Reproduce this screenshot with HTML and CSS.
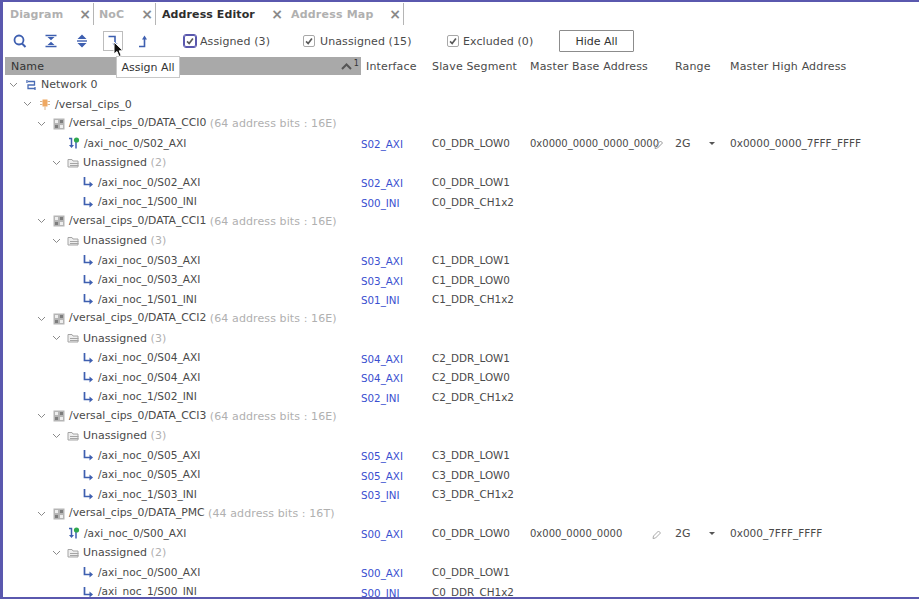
FILE: index.html
```html
<!DOCTYPE html>
<html lang="en">
<head>
<meta charset="utf-8">
<title>Address Editor</title>
<link rel="stylesheet" href="styles.css">
</head>
<body>
<svg class="defs" width="0" height="0">
  <defs>
    <symbol id="i-chip" viewBox="0 0 12 12"><rect x="0.5" y="0.5" width="11" height="11" fill="#b5b5b5"/><rect x="2" y="2" width="3" height="3" fill="#eee"/><rect x="7" y="7" width="3" height="3" fill="#eee"/><rect x="7" y="2" width="3" height="3" fill="#7d7d7d"/><rect x="2" y="7" width="3" height="3" fill="#7d7d7d"/></symbol>
    <symbol id="i-folder" viewBox="0 0 12 12"><path d="M1 2.500h4l1 1.500h5v6H1z" fill="#eee" stroke="#a5a5a5"/><path d="M3 6.500h8.500M3 8.500h8.500" stroke="#a5a5a5"/></symbol>
    <symbol id="i-un" viewBox="0 0 12 12"><path d="M2.500 1v7.500H8" fill="none" stroke="#3e5fb0" stroke-width="1.700"/><path d="M7.500 5.500l3.500 3-3.500 3z" fill="#3e5fb0"/></symbol>
    <symbol id="i-as" viewBox="0 0 12 12"><path d="M1 1.500h2.500v8" fill="none" stroke="#3e5fb0" stroke-width="1.500"/><path d="M1 8l2.500 3L6 8z" fill="#3e5fb0"/><path d="M8 11.500V5" stroke="#3e5fb0" stroke-width="1.500"/><circle cx="8.500" cy="3" r="2.600" fill="#2fa84f"/></symbol>
    <symbol id="i-ip" viewBox="0 0 12 12"><rect x="3.500" y="1.500" width="5" height="7" fill="#f0a860"/><path d="M1 3.500h2.500M1 6.500h2.500M8.500 3.500H11M8.500 6.500H11M6 8.500V12" stroke="#d8b48c"/></symbol>
    <symbol id="i-net" viewBox="0 0 12 12"><path d="M3 2.500h6.500v3.500H3v3.500h7" fill="none" stroke="#4a6cb5" stroke-width="1.300"/><path d="M2 1v3M10 8v3" stroke="#4a6cb5" stroke-width="1.300"/></symbol>
    <symbol id="i-chev" viewBox="0 0 9 6"><path d="M1 1l3.500 3.500L8 1" fill="none" stroke="#8a8a8a" stroke-width="1"/></symbol>
    <symbol id="i-check" viewBox="0 0 12 12"><path d="M2.500 6.500l2.500 2.500 4.500-6" fill="none" stroke="#5a5a5a" stroke-width="2"/></symbol>
  </defs>
</svg>
<div class="frame">
  <div class="tabs">
    <div class="tab tab-diagram"><span class="tab-label">Diagram</span><span class="tab-x">×</span></div>
    <div class="tab tab-noc"><span class="tab-label">NoC</span><span class="tab-x">×</span></div>
    <div class="tab tab-addr active"><span class="tab-label">Address Editor</span><span class="tab-x">×</span></div>
    <div class="tab tab-map"><span class="tab-label">Address Map</span><span class="tab-x">×</span></div>
  </div>
  <div class="toolbar">
    <div class="tools">
      <span class="tool"><svg width="16" height="16" viewBox="0 0 16 16"><circle cx="7" cy="7" r="4.500" fill="none" stroke="#3e5fb0" stroke-width="1.800"/><path d="M10 10.500l3.500 3.500" stroke="#3e5fb0" stroke-width="2"/></svg></span>
      <span class="tool"><svg width="16" height="16" viewBox="0 0 16 16"><path d="M2.500 2.500h11M2.500 13.500h11" stroke="#3e5fb0" stroke-width="1.400"/><path d="M4.500 4h7L8 7.300zM4.500 12h7L8 8.700z" fill="#3e5fb0"/></svg></span>
      <span class="tool"><svg width="16" height="16" viewBox="0 0 16 16"><path d="M3.500 6L8 1.500 12.500 6zM3.500 10L8 14.500 12.500 10z" fill="#3e5fb0"/><path d="M3 8h10" stroke="#3e5fb0" stroke-width="1.400"/></svg></span>
      <span class="tool tool-on"><svg width="16" height="16" viewBox="0 0 16 16"><path d="M3.500 3.500H10V11" fill="none" stroke="#3e5fb0" stroke-width="1.600"/><path d="M7.500 10.500h5L10 14z" fill="#3e5fb0"/></svg></span>
      <span class="tool"><svg width="16" height="16" viewBox="0 0 16 16"><path d="M3 13.500h5.500V6" fill="none" stroke="#3e5fb0" stroke-width="1.600"/><path d="M6 6.500h5L8.500 2.500z" fill="#3e5fb0"/></svg></span>
    </div>
    <div class="filters">
      <label class="filter filter-a"><span class="box box-focus"><svg width="12" height="12"><use href="#i-check"/></svg></span>Assigned (3)</label>
      <label class="filter filter-u"><span class="box"><svg width="12" height="12"><use href="#i-check"/></svg></span>Unassigned (15)</label>
      <label class="filter filter-e"><span class="box"><svg width="12" height="12"><use href="#i-check"/></svg></span>Excluded (0)</label>
      <button class="btn">Hide All</button>
    </div>
  </div>
  <div class="grid head">
    <div class="h-name"><span>Name</span><span class="sort"><svg width="11" height="7" viewBox="0 0 11 7"><path d="M1 6l4.500-4.500L10 6" fill="none" stroke="#555" stroke-width="2"/></svg><span class="sort-n">1</span></span></div>
    <div class="c-if-h">Interface</div><div>Slave Segment</div><div>Master Base Address</div><div>Range</div><div>Master High Address</div>
  </div>

  <div class="grid row"><div class="nm l0"><svg class="chev"><use href="#i-chev"/></svg><svg class="ic"><use href="#i-net"/></svg>Network 0</div></div>
  <div class="grid row"><div class="nm l1"><svg class="chev"><use href="#i-chev"/></svg><svg class="ic"><use href="#i-ip"/></svg>/versal_cips_0</div></div>

  <div class="grid row"><div class="nm l2"><svg class="chev"><use href="#i-chev"/></svg><svg class="ic"><use href="#i-chip"/></svg>/versal_cips_0/DATA_CCI0 <span class="dim">(64 address bits : 16E)</span></div></div>
  <div class="grid row"><div class="nm l3 leaf"><svg class="ic"><use href="#i-as"/></svg>/axi_noc_0/S02_AXI</div><div class="link">S02_AXI</div><div class="seg">C0_DDR_LOW0</div><div class="base">0x0000_0000_0000_0000<svg class="pen pen-over" width="11" height="11"><path d="M2 9.500l.5-2.500 5-5 2 2-5 5z" fill="none" stroke="#999"/></svg></div><div class="range">2G<span class="caret"></span></div><div class="high">0x0000_0000_7FFF_FFFF</div></div>
  <div class="grid row"><div class="nm l3"><svg class="chev"><use href="#i-chev"/></svg><svg class="ic"><use href="#i-folder"/></svg>Unassigned <span class="dim">(2)</span></div></div>
  <div class="grid row"><div class="nm l4"><svg class="ic"><use href="#i-un"/></svg>/axi_noc_0/S02_AXI</div><div class="link">S02_AXI</div><div class="seg">C0_DDR_LOW1</div></div>
  <div class="grid row"><div class="nm l4"><svg class="ic"><use href="#i-un"/></svg>/axi_noc_1/S00_INI</div><div class="link">S00_INI</div><div class="seg">C0_DDR_CH1x2</div></div>

  <div class="grid row"><div class="nm l2"><svg class="chev"><use href="#i-chev"/></svg><svg class="ic"><use href="#i-chip"/></svg>/versal_cips_0/DATA_CCI1 <span class="dim">(64 address bits : 16E)</span></div></div>
  <div class="grid row"><div class="nm l3"><svg class="chev"><use href="#i-chev"/></svg><svg class="ic"><use href="#i-folder"/></svg>Unassigned <span class="dim">(3)</span></div></div>
  <div class="grid row"><div class="nm l4"><svg class="ic"><use href="#i-un"/></svg>/axi_noc_0/S03_AXI</div><div class="link">S03_AXI</div><div class="seg">C1_DDR_LOW1</div></div>
  <div class="grid row"><div class="nm l4"><svg class="ic"><use href="#i-un"/></svg>/axi_noc_0/S03_AXI</div><div class="link">S03_AXI</div><div class="seg">C1_DDR_LOW0</div></div>
  <div class="grid row"><div class="nm l4"><svg class="ic"><use href="#i-un"/></svg>/axi_noc_1/S01_INI</div><div class="link">S01_INI</div><div class="seg">C1_DDR_CH1x2</div></div>

  <div class="grid row"><div class="nm l2"><svg class="chev"><use href="#i-chev"/></svg><svg class="ic"><use href="#i-chip"/></svg>/versal_cips_0/DATA_CCI2 <span class="dim">(64 address bits : 16E)</span></div></div>
  <div class="grid row"><div class="nm l3"><svg class="chev"><use href="#i-chev"/></svg><svg class="ic"><use href="#i-folder"/></svg>Unassigned <span class="dim">(3)</span></div></div>
  <div class="grid row"><div class="nm l4"><svg class="ic"><use href="#i-un"/></svg>/axi_noc_0/S04_AXI</div><div class="link">S04_AXI</div><div class="seg">C2_DDR_LOW1</div></div>
  <div class="grid row"><div class="nm l4"><svg class="ic"><use href="#i-un"/></svg>/axi_noc_0/S04_AXI</div><div class="link">S04_AXI</div><div class="seg">C2_DDR_LOW0</div></div>
  <div class="grid row"><div class="nm l4"><svg class="ic"><use href="#i-un"/></svg>/axi_noc_1/S02_INI</div><div class="link">S02_INI</div><div class="seg">C2_DDR_CH1x2</div></div>

  <div class="grid row"><div class="nm l2"><svg class="chev"><use href="#i-chev"/></svg><svg class="ic"><use href="#i-chip"/></svg>/versal_cips_0/DATA_CCI3 <span class="dim">(64 address bits : 16E)</span></div></div>
  <div class="grid row"><div class="nm l3"><svg class="chev"><use href="#i-chev"/></svg><svg class="ic"><use href="#i-folder"/></svg>Unassigned <span class="dim">(3)</span></div></div>
  <div class="grid row"><div class="nm l4"><svg class="ic"><use href="#i-un"/></svg>/axi_noc_0/S05_AXI</div><div class="link">S05_AXI</div><div class="seg">C3_DDR_LOW1</div></div>
  <div class="grid row"><div class="nm l4"><svg class="ic"><use href="#i-un"/></svg>/axi_noc_0/S05_AXI</div><div class="link">S05_AXI</div><div class="seg">C3_DDR_LOW0</div></div>
  <div class="grid row"><div class="nm l4"><svg class="ic"><use href="#i-un"/></svg>/axi_noc_1/S03_INI</div><div class="link">S03_INI</div><div class="seg">C3_DDR_CH1x2</div></div>

  <div class="grid row"><div class="nm l2"><svg class="chev"><use href="#i-chev"/></svg><svg class="ic"><use href="#i-chip"/></svg>/versal_cips_0/DATA_PMC <span class="dim">(44 address bits : 16T)</span></div></div>
  <div class="grid row"><div class="nm l3 leaf"><svg class="ic"><use href="#i-as"/></svg>/axi_noc_0/S00_AXI</div><div class="link">S00_AXI</div><div class="seg">C0_DDR_LOW0</div><div class="base">0x000_0000_0000<svg class="pen" width="11" height="11"><path d="M2 9.500l.5-2.500 5-5 2 2-5 5z" fill="none" stroke="#aaa"/></svg></div><div class="range">2G<span class="caret"></span></div><div class="high">0x000_7FFF_FFFF</div></div>
  <div class="grid row"><div class="nm l3"><svg class="chev"><use href="#i-chev"/></svg><svg class="ic"><use href="#i-folder"/></svg>Unassigned <span class="dim">(2)</span></div></div>
  <div class="grid row"><div class="nm l4"><svg class="ic"><use href="#i-un"/></svg>/axi_noc_0/S00_AXI</div><div class="link">S00_AXI</div><div class="seg">C0_DDR_LOW1</div></div>
  <div class="grid row"><div class="nm l4"><svg class="ic"><use href="#i-un"/></svg>/axi_noc_1/S00_INI</div><div class="link">S00_INI</div><div class="seg">C0_DDR_CH1x2</div></div>

  <div class="tooltip">Assign All</div>
  <svg class="cursor" width="12" height="17" viewBox="0 0 12 17"><path d="M1 1v12l3-2.500 2 5 2.200-1-2-4.700H10z" fill="#111" stroke="#fff" stroke-width="1"/></svg>
</div>
</body>
</html>
```

FILE: styles.css
```css
* { box-sizing: border-box; }
html, body { margin: 0; padding: 0; height: 599px; overflow: hidden; background: #fff; }
body { font: 11px/1 "DejaVu Sans", sans-serif; color: #4a4a4a; }
.defs { position: absolute; }
.frame {
  position: relative;
  height: 599px;
  border: solid #5a58ae;
  border-width: 2px 0 2px 3px;
  overflow: hidden;
  background: #fff;
}
.tabs { display: flex; height: 23px; padding-top: 1px; }
.tab {
  display: flex;
  align-items: center;
  justify-content: space-between;
  border-right: 1px solid #b5b5b5;
  font-weight: bold;
  letter-spacing: .1px;
  color: #b0b0b0;
  padding: 0 2px 0 7px;
}
.tab-diagram { width: 91px; }
.tab-noc { width: 62px; padding-left: 5px; }
.tab-addr { width: 127px; padding-left: 6px; padding-right: 0; border-right: 0; }
.tab-map { width: 121px; padding-left: 8px; letter-spacing: .2px; }
.tab.active { color: #2e2e2e; }
.tab-x { font-weight: bold; font-size: 14px; color: #8a8a8a; letter-spacing: 0; }
.toolbar { display: flex; align-items: center; height: 32px; padding-left: 9px; }
.tools { display: flex; gap: 15px; width: 172px; }
.tool { width: 16px; height: 16px; display: block; }
.tool svg { display: block; }
.tool-on { outline: 1px solid #bdbdbd; outline-offset: 1px; }
.filters { display: flex; align-items: center; }
.filter { display: flex; align-items: center; gap: 5px; letter-spacing: .1px; }
.filter-a { width: 119px; gap: 4px; }
.filter-u { width: 144px; }
.filter-e { width: 112px; gap: 4px; }
.box {
  width: 12px; height: 12px;
  border: 1px solid #a8a8a8;
  border-radius: 2px;
  display: block;
}
.box svg { display: block; width: 10px; height: 10px; }
.box-focus { outline: 1px solid #5a58ae; border-color: #5a58ae; }
.btn {
  width: 75px; height: 22px;
  background: #fff;
  border: 1px solid #8c8c8c;
  border-radius: 1px;
  font: 11px "DejaVu Sans", sans-serif;
  color: #333;
  padding: 0;
}
.grid {
  display: grid;
  grid-template-columns: 356px 71px 98px 145px 55px 1fr;
  align-items: center;
  white-space: nowrap;
}
.head { height: 18px; padding-left: 2px; letter-spacing: .15px; }
.h-name {
  background: #a9a9a9;
  height: 18px;
  display: flex;
  align-items: center;
  justify-content: space-between;
  padding: 0 2px 0 6px;
  color: #333;
}
.sort { display: flex; align-items: center; gap: 2px; }
.sort-n { font-size: 8px; margin-top: -4px; }
.c-if-h { padding-left: 5px; }
.row { height: 19.5px; padding-left: 2px; }
.nm { display: flex; align-items: center; white-space: pre; }
.l0 { padding-left: 4px; }
.l1 { padding-left: 18px; }
.l2 { padding-left: 32px; font-size: 10.8px; }
.l3 { padding-left: 47px; }
.l3.leaf { padding-left: 63px; font-size: 10.6px; }
.l4 { padding-left: 77px; font-size: 10.6px; }
.chev { width: 9px; height: 6px; margin-right: 7px; flex: none; }
.ic { width: 12px; height: 12px; margin-right: 4px; flex: none; }
.dim { color: #b0b0b0; font-size: 11px; letter-spacing: .1px; }
.l3 .chev { margin-right: 6px; }
.link { color: #3a4fd0; position: relative; top: 1px; font-size: 10.3px; }
.seg { font-size: 10.4px; }
.high { font-size: 10.5px; }
.base { position: relative; top: 1px; display: flex; align-items: center; font-size: 10px; }
.pen { position: absolute; left: 121px; top: 0; }
.pen-over { left: 123px; }
.range { position: relative; }
.caret {
  position: absolute; left: 34px; top: 4px;
  border: 3px solid transparent; border-top: 3px solid #555; border-bottom: 0;
}
.tooltip {
  position: absolute;
  left: 113px; top: 54px;
  width: 64px; height: 22px;
  background: #fff;
  border: 1px solid #c8c8c8;
  color: #333;
  display: flex; align-items: center; justify-content: center;
  z-index: 2;
}
.cursor { position: absolute; left: 110px; top: 39px; z-index: 3; }
```
